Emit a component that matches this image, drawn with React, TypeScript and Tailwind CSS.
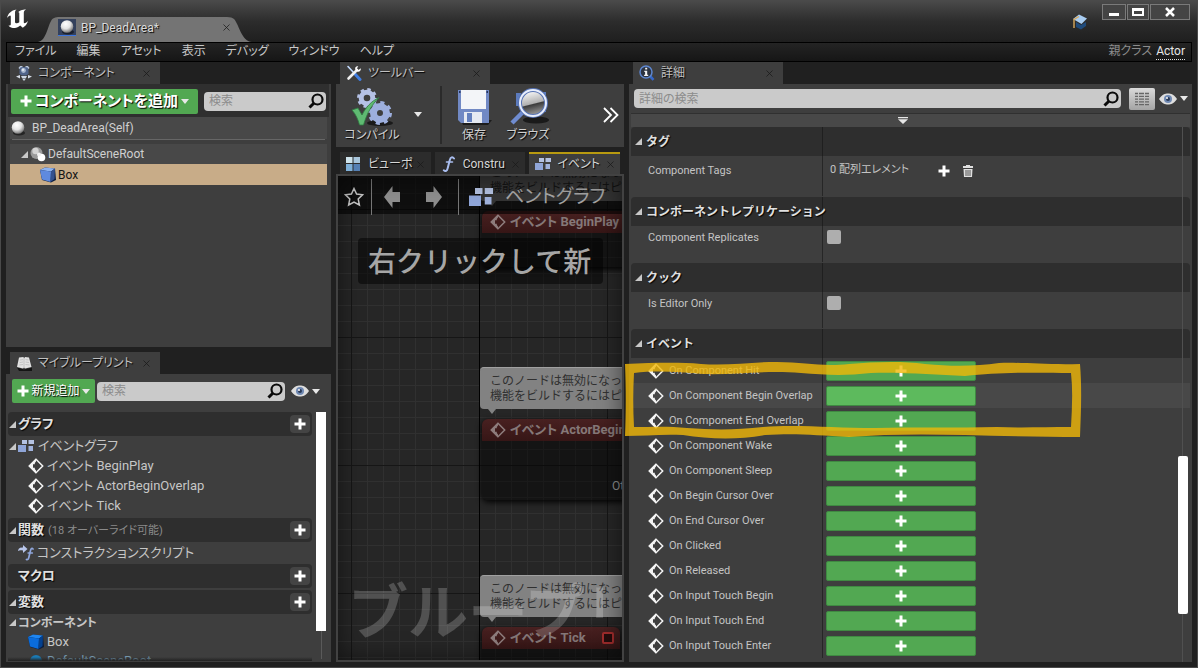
import { useState } from 'react';
import type { ReactNode } from 'react';
import clsx from 'clsx';

const SHADOW = '[text-shadow:1px_1px_1px_#000]';
const FULL_WIDTH = '[font-feature-settings:normal]';

const menus = ['ファイル', '編集', 'アセット', '表示', 'デバッグ', 'ウィンドウ', 'ヘルプ'];

const componentEvents = [
    'On Component Hit',
    'On Component Begin Overlap',
    'On Component End Overlap',
    'On Component Wake',
    'On Component Sleep',
    'On Begin Cursor Over',
    'On End Cursor Over',
    'On Clicked',
    'On Released',
    'On Input Touch Begin',
    'On Input Touch End',
    'On Input Touch Enter',
];

/* ---------- icons ---------- */

function UnrealLogo() {
    return (
        <svg className="h-5 w-[22px]" viewBox="0 0 22 20" fill="#fff">
            <path d="M0 9C1 4.500 4 1.500 9.500.5C7.800 1.800 8 3 8 4.500V13c0 1.600 2.600 1.800 4.300.3V4.500c0-1-.4-1.400-1.500-1C12.500 1.500 15 .8 19 .3c-1.800 1.200-2.200 2.200-2.200 3.700v9.600c0 1.200 1.800.8 4.200-1.600c-1 3.600-3 5.300-5.200 6.800L13.200 16.600c-1.700 1.700-3.600 2.400-5.400 2.400c-2.900 0-5-.8-6.300-2.600c1.200.4 2.300.1 2.300-1.200V7.500C3.800 5.500 1.800 6.500 0 9z" />
        </svg>
    );
}

function Sphere({ className }: { className?: string }) {
    return (
        <svg className={className} viewBox="0 0 16 16">
            <defs>
                <radialGradient id="ball" cx=".4" cy=".3" r=".75">
                    <stop offset="0" stopColor="#fff" />
                    <stop offset=".5" stopColor="#e4e4e4" />
                    <stop offset="1" stopColor="#666" />
                </radialGradient>
            </defs>
            <ellipse cx="9" cy="13" rx="6" ry="2.500" fill="#000" opacity=".5" />
            <circle cx="8" cy="7.500" r="6.300" fill="url(#ball)" />
        </svg>
    );
}

function SceneRootIcon() {
    return (
        <svg className="h-4 w-4" viewBox="0 0 16 16">
            <circle cx="6.500" cy="7" r="6" fill="#9a9a9a" />
            <circle cx="5.500" cy="5" r="3.200" fill="#d2d2d2" />
            <circle cx="11.500" cy="11.500" r="3.800" fill="#fff" />
            <circle cx="9" cy="8.500" r="2" fill="#f1f1f1" />
        </svg>
    );
}

function CubeIcon({ vivid }: { vivid?: boolean }) {
    return (
        <svg className="h-4 w-4" viewBox="0 0 16 16">
            <path d="M0 3L5 .500L15 1.500L16 13L11 15.500L2 13z" fill="#0b1c3c" />
            <path d="M0 3L5 .5L15 1.500L11 4.500z" fill={vivid ? '#1f86f0' : '#8db2f0'} />
            <path d="M0 3L11 4.500L10.500 15L2 12.500z" fill={vivid ? '#0a6cdc' : '#5f8ade'} />
            <path d="M11 4.500L15 1.500L14.500 12L10.500 15z" fill={vivid ? '#04408e' : '#34508e'} />
        </svg>
    );
}

function Plus({ className = 'h-3 w-3' }: { className?: string }) {
    return (
        <svg className={className} viewBox="0 0 12 12" fill="#fff">
            <path d="M4.500.5h3v4h4v3h-4v4h-3v-4h-4v-3h4z" />
        </svg>
    );
}

function CaretDown() {
    return (
        <svg className="h-[5px] w-2 shrink-0" viewBox="0 0 8 5" fill="#e8e8e8">
            <path d="M0 0h8L4 5z" />
        </svg>
    );
}

function TreeArrow() {
    return (
        <svg className="h-[7px] w-[7px] shrink-0" viewBox="0 0 7 7" fill="#c8c8c8">
            <path d="M7 0v7H0z" />
        </svg>
    );
}

function SearchIcon() {
    return (
        <svg className="h-4 w-4 shrink-0" viewBox="0 0 16 16" fill="none" stroke="#0a0a0a">
            <circle cx="9.500" cy="6.500" r="5" strokeWidth="2.200" />
            <path d="M5.800 10.200L1.500 14.500" strokeWidth="3" />
        </svg>
    );
}

function EyeIcon() {
    return (
        <svg className="h-3 w-[18px]" viewBox="0 0 18 12">
            <path d="M0 6C3 1.500 6 .5 9 .5S15 1.500 18 6C15 10.500 12 11.500 9 11.500S3 10.500 0 6z" fill="#dedede" />
            <circle cx="9" cy="6" r="4" fill="#6f89b3" />
            <circle cx="9" cy="6" r="2" fill="#2a3a58" />
            <circle cx="8" cy="5" r="1" fill="#fff" />
        </svg>
    );
}

function EventIcon({ dim }: { dim?: boolean }) {
    const color = dim ? '#8d7c7c' : '#f4f4f4';
    return (
        <svg className="h-4 w-4 shrink-0" viewBox="0 0 16 16">
            <path d="M8 1.300L14.700 8L8 14.700L1.300 8z" fill="none" stroke={color} strokeWidth="1.500" />
            <path d="M8 .5L.5 8L8 15.500V12.500L6.800 11V9.800H5V6.200H6.800V5L8 3.500z" fill={color} />
        </svg>
    );
}

function GraphIcon({ className = 'h-3 w-4' }: { className?: string }) {
    return (
        <svg className={className} viewBox="0 0 16 12">
            <path d="M4 0h5v4H4zM10.500 0H16v4h-5.500z" fill="#b4c2e2" />
            <path d="M0 5h8v7H0z" fill="#8fa5d8" />
            <path d="M10.500 6H15v5h-4.500z" fill="#a0b2dc" />
        </svg>
    );
}

function ViewportIcon() {
    return (
        <svg className="h-[14px] w-[14px]" viewBox="0 0 14 14">
            <path d="M0 0h6.500v6H0z" fill="#cfe4ec" />
            <path d="M7.500 0H14v6H7.500z" fill="#a8c6dc" />
            <path d="M0 7h6.500v7H0z" fill="#7fb0d8" />
            <path d="M7.500 7H14v7H7.500z" fill="#5580b4" />
        </svg>
    );
}

function FunctionGlyph() {
    return (
        <svg className="h-4 w-4" viewBox="0 0 16 16" fill="none" stroke="#a9bdee" strokeLinecap="round">
            <path d="M13 2.500C11.500.5 9.600 1 8.800 4L6.600 12.500C6 15 4.500 15.800 2.800 14.300" strokeWidth="2" />
            <path d="M5.500 6h6" strokeWidth="1.600" />
        </svg>
    );
}

function ConstructionIcon() {
    return (
        <svg className="h-4 w-4" viewBox="0 0 16 16" fill="none" stroke="#8fa6dc" strokeLinecap="round">
            <path d="M15 4C14 2.800 13 3.500 12.500 5.500L10.800 12.500C10.400 14.500 9.500 15 8.500 14.500" strokeWidth="1.700" />
            <path d="M10 8h4.500" strokeWidth="1.300" />
            <path d="M0 6C.5 3 2 2.500 5 2.500V0L9.500 4L5 8V5.500C3 5.300 1.500 5 0 6z" fill="#b8c6ea" stroke="none" />
        </svg>
    );
}

function PuppetIcon() {
    return (
        <svg className="h-[15px] w-4" viewBox="0 0 16 15">
            <path d="M3.500 1h9v7L10 9.500H6L3.500 8z" fill="#50648a" />
            <path d="M3 2.500L4.500.5h2M13 2.500L11.500.5h-2" stroke="#b9c6da" strokeWidth="1.300" fill="none" />
            <circle cx="7.500" cy="4.500" r="2.400" fill="#a9b8cf" />
            <circle cx="7" cy="3.800" r="1.200" fill="#e2e8f0" />
            <path d="M0 10.500l4-1.500v3.500zM16 10.500L12 9v3.500z" fill="#d6dce6" />
            <path d="M5 10h6l-1 2H6zM6 12.500h4L8 15z" fill="#cdd6e2" />
        </svg>
    );
}

function BookIcon() {
    return (
        <svg className="h-[15px] w-4" viewBox="0 0 16 15">
            <path d="M1 11.500l7 2l8-2V15H3z" fill="#151515" />
            <path d="M1 11L3 1.500L7.500 1L8 2.500L9 1L13 1.500L15.500 11L9 12.500L8 11.500L7 12.500z" fill="#e2e2e2" />
            <path d="M8 2.500V11.500M4 4l3-.3M3.700 6.500L7 6M3.300 9L7 8.500M9.500 3.700l3 .3M9.500 6l3.500.5M9.500 8.500l4 .5" stroke="#b4b4b4" strokeWidth=".7" />
        </svg>
    );
}

function ToolsIcon() {
    return (
        <svg className="h-4 w-4" viewBox="0 0 16 16" fill="none" strokeLinecap="round">
            <path d="M2 1.500L8 8" stroke="#c4dcff" strokeWidth="1.600" />
            <path d="M8.500 8.500L14 14.500" stroke="#3f7de0" strokeWidth="3" />
            <path d="M2.500 13.500L11 5" stroke="#f0f0f0" strokeWidth="2.600" />
            <path d="M14.800 3.200L12.500 5L10.800 3.500L12.300 1.200C10 .8 8.600 2.500 9.300 4.500L11.500 6.700C13.500 7.200 15.200 5.500 14.800 3.200z" fill="#fff" />
        </svg>
    );
}

function DetailsIcon() {
    return (
        <svg className="h-4 w-4" viewBox="0 0 16 16">
            <path d="M10.500 10.500L14.500 14.800" stroke="#3567c8" strokeWidth="2.600" />
            <circle cx="7" cy="7" r="6" fill="#2c3340" stroke="#5d86cf" strokeWidth="1.500" />
            <path d="M6.200 2.800h2v1.800h-2zM5.300 5.800h2.900v4h1v1.200H5.100V9.800h1V7h-.8z" fill="#f2f2f2" />
        </svg>
    );
}

function CompileIcon() {
    return (
        <svg className="h-10 w-11" viewBox="0 0 44 40" fill="none">
            <ellipse cx="30" cy="36" rx="13" ry="3" fill="#1a1a1a" />
            <circle cx="17" cy="11" r="5.800" stroke="#b5c2e6" strokeWidth="5" />
            <circle cx="17" cy="11" r="8.500" stroke="#b5c2e6" strokeWidth="3" strokeDasharray="3.340 3.340" />
            <circle cx="30" cy="26" r="6.500" stroke="#9dafde" strokeWidth="7" />
            <circle cx="30" cy="26" r="10.500" stroke="#9dafde" strokeWidth="3" strokeDasharray="4.120 4.120" />
            <path d="M2 23l6-2l4 7C16 20 21 14.500 29 10.500C22 17.500 17 26 13.500 38H9.500C8 32 5.500 27 2 23z" fill="#5fba72" stroke="#2f7a40" strokeWidth=".8" />
        </svg>
    );
}

function SaveIcon() {
    return (
        <svg className="h-10 w-9" viewBox="0 0 36 40">
            <path d="M5 33h31l-4 5H7z" fill="#1c1c1c" />
            <path d="M2 3h31v33H5l-3-3z" fill="#7189c4" />
            <path d="M5 3h25v19H5z" fill="#f3f5f8" />
            <path d="M8 25h18v11H8z" fill="#e6eaf2" />
            <path d="M11 26h5v9h-5z" fill="#6480bf" />
            <path d="M3 4h1.500v2H3zM30.500 4H32v2h-1.500z" fill="#26345c" />
        </svg>
    );
}

function BrowseIcon() {
    return (
        <svg className="h-10 w-11" viewBox="0 0 44 40">
            <defs>
                <linearGradient id="lens" x1=".35" y1="0" x2=".6" y2="1">
                    <stop offset="0" stopColor="#fff" />
                    <stop offset=".52" stopColor="#b0b0b0" />
                    <stop offset=".56" stopColor="#3c3c3c" />
                    <stop offset="1" stopColor="#a8a8a8" />
                </linearGradient>
            </defs>
            <ellipse cx="30" cy="33" rx="13" ry="3.500" fill="#1a1a1a" />
            <path d="M10 6h5l-2 13h-3zM35 5h5v20h-6z" fill="#5c7bbd" />
            <path d="M17 25L6 36" stroke="#6f8cd0" strokeWidth="4.500" />
            <circle cx="27" cy="16" r="13" fill="url(#lens)" stroke="#5773b4" strokeWidth="4" />
            <circle cx="27" cy="16" r="13" fill="none" stroke="#e8eefc" strokeWidth="2" />
        </svg>
    );
}

function GraduationIcon() {
    return (
        <svg className="h-4 w-4" viewBox="0 0 16 16">
            <path d="M4 8l5 3l5-3v4l-5 3.500L4 13z" fill="#1f4b7c" />
            <path d="M1 5L7 .5L15 4.500L9.500 10z" fill="#a9cdf2" />
            <path d="M7 2.500L2 5.500V14" stroke="#d7a95c" strokeWidth="1.400" fill="none" />
        </svg>
    );
}

/* ---------- shared pieces ---------- */

function PanelTab({ icon, label }: { icon: ReactNode; label: string }) {
    return (
        <div className="flex h-[22px]">
            <div className="ml-1 flex w-[150px] items-center gap-1.5 bg-[#3e3e3e] pr-2 pl-1.5">
                {icon}
                <span className={clsx('flex-1 text-[12px] text-[#c0c0c0]', SHADOW)}>{label}</span>
                <CloseButton />
            </div>
        </div>
    );
}

function CloseButton() {
    return (
        <button type="button" aria-label="閉じる" className="flex h-3 w-3 shrink-0 items-center justify-center">
            <svg className="h-[7px] w-[7px]" viewBox="0 0 7 7" stroke="#1a1a1a" strokeOpacity=".75">
                <path d="M.5.5l6 6M6.500.5l-6 6" />
            </svg>
        </button>
    );
}

function SearchBox({ placeholder }: { placeholder: string }) {
    return (
        <label className="flex h-[19px] min-w-0 flex-1 items-center rounded-sm bg-[#cacaca] pr-0.5 pl-[5px]">
            <input
                type="text"
                aria-label={placeholder}
                placeholder={placeholder}
                className="h-full min-w-0 flex-1 bg-transparent text-[12px] text-black outline-none placeholder:text-[#8c8c8c]"
            />
            <SearchIcon />
        </label>
    );
}

function BlueprintSection({ title, note, arrow = true }: { title: string; note?: string; arrow?: boolean }) {
    return (
        <div className="flex h-6 items-center gap-0.5 rounded-sm bg-[#2e2e2e] pr-0.5 pl-px">
            {arrow ? <TreeArrow /> : <span className="w-[7px]" />}
            <h3 className={clsx('text-[13px] font-bold text-[#e0e0e0]', SHADOW)}>{title}</h3>
            {note && <span className="ml-0.5 pt-0.5 text-[11px] text-[#8a8a8a]">{note}</span>}
            <button type="button" aria-label={`${title}を追加`} className="ml-auto flex h-[18px] w-5 items-center justify-center rounded-sm bg-[#444]">
                <Plus />
            </button>
        </div>
    );
}

/* ---------- left column ---------- */

function ComponentsPanel() {
    return (
        <section>
            <PanelTab icon={<PuppetIcon />} label="コンポーネント" />
            <div className="h-[263px] bg-[#3e3e3e]">
                <div className="mx-0.5 flex h-[33px] items-center gap-1.5 bg-[#2f2f2f] px-[3px] pt-px">
                    <button type="button" className="flex h-[25px] w-[187px] shrink-0 items-center justify-center gap-[3px] rounded-xs bg-[#52a852]">
                        <Plus />
                        <span className={clsx('text-[15px] font-bold text-white', SHADOW)}>コンポーネントを追加</span>
                        <CaretDown />
                    </button>
                    <SearchBox placeholder="検索" />
                </div>
                <div className="mr-1 ml-1 text-[12px] text-[#d0d0d0]">
                    <div className="flex h-[22px] items-center gap-1.5 bg-[#484848]">
                        <Sphere className="h-4 w-4" />
                        <span>BP_DeadArea(Self)</span>
                    </div>
                    <div className="mx-0.5 mb-1 h-px bg-[#666]" />
                    <div className="flex h-5 items-center gap-0.5 bg-[#484848] pl-[11px]">
                        <TreeArrow />
                        <SceneRootIcon />
                        <span>DefaultSceneRoot</span>
                    </div>
                    <div className="flex h-[21px] items-center gap-0.5 bg-[#c8ac88] pl-[30px] text-[#141414]">
                        <CubeIcon />
                        <span>Box</span>
                    </div>
                </div>
            </div>
        </section>
    );
}

function MyBlueprintPanel() {
    return (
        <section className="flex min-h-0 flex-1 flex-col">
            <PanelTab icon={<BookIcon />} label="マイブループリント" />
            <div className="flex min-h-0 flex-1 flex-col bg-[#3e3e3e] pb-px">
                <div className="flex h-[38px] shrink-0 items-center gap-0.5 pr-[11px] pb-1 pl-1.5">
                    <button type="button" className="flex h-6 w-[83px] shrink-0 items-center justify-center gap-0.5 rounded-xs bg-[#52a852]">
                        <Plus />
                        <span className={clsx('text-[12px] text-white', SHADOW)}>新規追加</span>
                        <CaretDown />
                    </button>
                    <SearchBox placeholder="検索" />
                    <button type="button" aria-label="表示オプション" className="ml-1 flex items-center gap-[3px]">
                        <EyeIcon />
                        <CaretDown />
                    </button>
                </div>
                <div className="flex min-h-0 flex-1 gap-1 pr-[5px] pl-0.5">
                    <div className="relative min-w-0 flex-1 overflow-hidden text-[13px] text-[#c6c6c6]">
                        <BlueprintSection title="グラフ" />
                        <div className="mb-0.5">
                            <div className="flex h-5 items-center gap-0.5 pl-px">
                                <TreeArrow />
                                <GraphIcon />
                                <span className="ml-0.5">イベントグラフ</span>
                            </div>
                            {['イベント BeginPlay', 'イベント ActorBeginOverlap', 'イベント Tick'].map((name) => (
                                <div key={name} className="flex h-5 items-center gap-[3px] pl-5">
                                    <EventIcon />
                                    <span>{name}</span>
                                </div>
                            ))}
                        </div>
                        <BlueprintSection title="関数" note="(18 オーバーライド可能)" />
                        <div className="flex h-[22px] items-center gap-[3px] pl-2.5">
                            <ConstructionIcon />
                            <span>コンストラクションスクリプト</span>
                        </div>
                        <BlueprintSection title="マクロ" arrow={false} />
                        <div className="h-0.5" />
                        <BlueprintSection title="変数" />
                        <div className="flex h-[17px] items-center gap-0.5 pl-px text-[12px]">
                            <TreeArrow />
                            <h4 className="font-bold">コンポーネント</h4>
                        </div>
                        <div className="flex h-[22px] items-center gap-[3px] pl-5">
                            <CubeIcon vivid />
                            <span>Box</span>
                        </div>
                        <div className="flex h-4 items-center gap-[3px] pl-5 text-[#7496ac]">
                            <svg className="h-4 w-4" viewBox="0 0 16 16" fill="#1a7ab4">
                                <circle cx="8" cy="8" r="6" />
                            </svg>
                            <span>DefaultSceneRoot</span>
                        </div>
                        <div className="absolute inset-x-0 bottom-0 h-1 bg-linear-to-b from-transparent to-[#222]" />
                    </div>
                    <div className="w-2.5 shrink-0">
                        <div className="h-[219px] bg-white" />
                        <div className="mx-auto h-7 w-px bg-[#5a5a5a]" />
                    </div>
                </div>
            </div>
        </section>
    );
}

/* ---------- middle column ---------- */

function ToolbarPanel() {
    const label = clsx('text-[12px] leading-4 text-[#d0d0d0]', SHADOW);
    return (
        <section>
            <PanelTab icon={<ToolsIcon />} label="ツールバー" />
            <div className="flex h-[63px] items-center bg-[#3e3e3e] pr-1 pb-0.5 pl-1.5">
                <button type="button" className="flex w-[60px] flex-col items-center">
                    <CompileIcon />
                    <span className={label}>コンパイル</span>
                </button>
                <button type="button" aria-label="コンパイルオプション" className="flex h-10 w-8 items-center justify-center">
                    <CaretDown />
                </button>
                <div className="mr-3 ml-1.5 h-[58px] w-0.5 bg-[#2a2a2a]" />
                <button type="button" className="flex w-10 flex-col items-center">
                    <SaveIcon />
                    <span className={label}>保存</span>
                </button>
                <button type="button" className="ml-[7px] flex w-[54px] flex-col items-center">
                    <BrowseIcon />
                    <span className={label}>ブラウズ</span>
                </button>
                <button type="button" aria-label="その他" className="mr-px ml-auto">
                    <svg className="h-4 w-4" viewBox="0 0 16 16" fill="none" stroke="#fff" strokeWidth="1.800">
                        <path d="M1 1l7 7l-7 7M7.500 1l7 7l-7 7" />
                    </svg>
                </button>
            </div>
        </section>
    );
}

function DocTab({ icon, label, active }: { icon: ReactNode; label: string; active?: boolean }) {
    return (
        <div
            className={clsx(
                'flex h-[22px] min-w-0 flex-1 items-center border-t-2 pr-1 pl-1.5',
                active ? 'border-t-[#b89a10] bg-[#3e3e3e]' : 'border-t-[#2c2c2c] bg-[#2c2c2c]',
            )}
        >
            <span className="flex w-[22px] shrink-0">{icon}</span>
            <span className={clsx('min-w-0 flex-1 text-[12px] whitespace-nowrap text-[#d6d6d6]', SHADOW)}>{label}</span>
            <CloseButton />
        </div>
    );
}

type NodeProps = { className: string; title: string; body: string; pin?: string; stop?: boolean };

function GraphNode({ className, title, body, pin, stop }: NodeProps) {
    return (
        <div className={clsx('absolute left-[142px]', className)}>
            <div
                className={clsx(
                    'relative h-[42px] w-[280px] rounded-sm border-t border-[#a0a0a0] bg-[#828282] px-2.5 pt-1.5 text-[12px] leading-[15px] whitespace-nowrap text-[#303030]',
                    FULL_WIDTH,
                )}
            >
                このノードは無効になっ
                <br />
                機能をビルドするにはピ
                <svg className="absolute top-full left-2 h-[5px] w-2" viewBox="0 0 8 5" fill="#828282">
                    <path d="M0 0h8L4 5z" />
                </svg>
            </div>
            <div className={clsx('mt-2.5 ml-0.5 overflow-hidden rounded-md bg-black/45 shadow-[0_2px_6px_#000]', body)}>
                <div className="flex h-[22px] items-center gap-1 bg-linear-to-b from-[#4e2222]/90 to-[#3a1616]/90 pr-1.5 pl-2">
                    <EventIcon dim />
                    <span className="text-[13px] font-bold whitespace-nowrap text-[#857878]">{title}</span>
                    {stop && <span className="ml-auto h-3 w-3 rounded-xs border-2 border-[#a02c2c] bg-[#240c0c]" />}
                </div>
                {pin && <div className="mt-9 pl-[130px] text-[12px] whitespace-nowrap text-[#8c8c8c]">{pin}</div>}
            </div>
        </div>
    );
}

function ArrowGlyph({ flip }: { flip?: boolean }) {
    return (
        <svg className={clsx('h-[22px] w-[18px]', flip && 'rotate-180')} viewBox="0 0 18 22" fill="#8e8e8e">
            <path d="M9.500 0v6H17v10H9.500v6L1 11z" />
        </svg>
    );
}

function EventGraph() {
    return (
        <section className="flex min-h-0 flex-1 flex-col">
            <div className="flex gap-1 pr-1 pl-1">
                <DocTab icon={<ViewportIcon />} label="ビューポ" />
                <DocTab icon={<FunctionGlyph />} label="Constru" />
                <DocTab icon={<GraphIcon />} label="イベント" active />
            </div>
            <div className="relative min-h-0 flex-1 overflow-hidden border-2 border-[#424242] bg-[#262626] bg-[linear-gradient(#161616_1px,transparent_1px),linear-gradient(90deg,#161616_1px,transparent_1px),linear-gradient(#303030_1px,transparent_1px),linear-gradient(90deg,#303030_1px,transparent_1px)] bg-[size:128px_128px,128px_128px,16px_16px,16px_16px] bg-[position:0_33px,13px_0,0_1px,13px_0]">
                <div className="absolute inset-y-0 left-[141px] w-px bg-black" />
                <GraphNode className="-top-[17px]" title="イベント BeginPlay" body="h-14 w-[280px]" />
                <GraphNode className="top-[191px]" title="イベント ActorBeginOverlap" body="h-[81px] w-[280px]" pin="Other Actor" />
                <GraphNode className="top-[399px]" title="イベント Tick" body="h-[81px] w-[138px]" stop />

                <div className="absolute inset-x-0 top-0 flex h-[38px] items-center bg-black/60 pt-1 pl-1.5">
                    <button type="button" aria-label="お気に入り">
                        <svg className="h-5 w-5" viewBox="0 0 20 20" fill="none" stroke="#c8c8c8" strokeWidth="1.500">
                            <path d="M10 1.500l2.600 5.600l6 .7l-4.400 4.100l1.200 6.100L10 15l-5.400 3l1.200-6.100L1.400 7.800l6-.7z" />
                        </svg>
                    </button>
                    <div className="mx-[7px] h-9 w-px bg-[#777]" />
                    <button type="button" aria-label="戻る" className="ml-1">
                        <ArrowGlyph />
                    </button>
                    <button type="button" aria-label="進む" className="ml-6">
                        <ArrowGlyph flip />
                    </button>
                    <div className="mr-2.5 ml-[15px] h-9 w-px bg-[#777]" />
                    <GraphIcon className="h-5 w-6" />
                    <span className="ml-3 text-[19px] leading-6 whitespace-nowrap text-[#a4a4a4]">ベントグラフ</span>
                </div>

                <div
                    className={clsx(
                        'absolute top-[62px] left-5 flex h-[46px] w-[245px] items-center rounded-sm bg-black/50 pt-1 pl-2.5 text-[28px] font-medium whitespace-nowrap text-[#a6a6a6]',
                        FULL_WIDTH,
                    )}
                >
                    右クリックして新
                </div>
                <div
                    className={clsx(
                        'pointer-events-none absolute bottom-0.5 left-2.5 w-[255px] overflow-hidden text-[60px] leading-[88px] font-bold whitespace-nowrap text-white/20',
                        FULL_WIDTH,
                    )}
                >
                    ブループリ
                </div>
                <div className="pointer-events-none absolute inset-0 shadow-[inset_0_0_24px_#0008]" />
            </div>
        </section>
    );
}

/* ---------- details ---------- */

function DetailsSection({ title, children }: { title: string; children: ReactNode }) {
    return (
        <section>
            <div className="flex h-[29px] rounded-t-sm bg-[#2e2e2e]">
                <h3
                    className={clsx(
                        'flex w-[192px] items-center gap-1 border-r border-[#1f1f1f] pl-1 text-[12px] font-bold whitespace-nowrap text-[#e0e0e0]',
                        SHADOW,
                        FULL_WIDTH,
                    )}
                >
                    <TreeArrow />
                    {title}
                </h3>
            </div>
            {children}
        </section>
    );
}

function CheckRow({ id, label }: { id: string; label: string }) {
    const [checked, setChecked] = useState(false);
    return (
        <div className="mb-px flex h-9">
            <div className="w-[192px] border-r border-[#262626] pt-1 pl-[17px]">
                <label htmlFor={id} className="block leading-4">
                    {label}
                </label>
            </div>
            <input
                id={id}
                type="checkbox"
                checked={checked}
                onChange={(e) => setChecked(e.target.checked)}
                className="mt-1 ml-1 h-[14px] w-[14px] appearance-none rounded-xs bg-[#aeaeae] checked:bg-[#e09a2c]"
            />
        </div>
    );
}

function DetailsPanel() {
    return (
        <aside className="relative flex min-w-0 flex-1 flex-col">
            <PanelTab icon={<DetailsIcon />} label="詳細" />
            <div className="flex min-h-0 flex-1 flex-col overflow-hidden bg-[#3e3e3e] px-0.5">
                <div className="flex h-[29px] shrink-0 items-center gap-2 pr-0.5 pl-[3px]">
                    <SearchBox placeholder="詳細の検索" />
                    <button type="button" aria-label="プロパティマトリックス" className="flex h-[22px] w-[26px] items-center justify-center rounded-xs bg-linear-to-b from-[#dadada] to-[#a4a4a4]">
                        <svg className="h-[14px] w-4" viewBox="0 0 16 14" stroke="#666" strokeWidth="1.300">
                            <path d="M1 1.500h3M5 1.500h5M11 1.500h4M1 4.300h3M5 4.300h5M11 4.300h4M1 7.100h3M5 7.100h5M11 7.100h4M1 9.900h3M5 9.900h5M11 9.900h4M1 12.700h3M5 12.700h5M11 12.700h4" />
                        </svg>
                    </button>
                    <button type="button" aria-label="表示オプション" className="-ml-1 flex items-center gap-[3px]">
                        <EyeIcon />
                        <CaretDown />
                    </button>
                </div>
                <div className="flex h-[14px] shrink-0 items-center justify-center border-t border-[#303030] bg-[#484848] pr-4">
                    <svg className="h-[7px] w-2.5" viewBox="0 0 10 7" fill="#e6e6e6">
                        <path d="M0 0h10v1.300H0zM0 2.300h10L5 7z" />
                    </svg>
                </div>
                <div className="relative min-h-0 flex-1 overflow-hidden text-[11px] text-[#c4c4c4]">
                    <DetailsSection title="タグ">
                        <div className="mb-px flex h-10">
                            <div className="w-[192px] border-r border-[#262626] pt-[7px] pl-[17px] leading-4">Component Tags</div>
                            <div className="flex h-[29px] items-center pl-[7px]">
                                <span className="w-[108px]">0 配列エレメント</span>
                                <button type="button" aria-label="エレメントを追加" className="mr-3">
                                    <Plus />
                                </button>
                                <button type="button" aria-label="すべて削除">
                                    <svg className="h-3 w-3" viewBox="0 0 12 12">
                                        <path d="M4 0h4v1h3v2H1V1h3z" fill="#e0e0e0" />
                                        <path d="M1.500 4h9L10 12H2z" fill="#e0e0e0" />
                                        <path d="M4 5v6M6 5v6M8 5v6" stroke="#444" strokeWidth=".9" />
                                    </svg>
                                </button>
                            </div>
                        </div>
                    </DetailsSection>
                    <DetailsSection title="コンポーネントレプリケーション">
                        <CheckRow id="replicates" label="Component Replicates" />
                    </DetailsSection>
                    <DetailsSection title="クック">
                        <CheckRow id="editor-only" label="Is Editor Only" />
                    </DetailsSection>
                    <DetailsSection title="イベント">
                        {componentEvents.map((name) => {
                            const hovered = name === 'On Component Begin Overlap';
                            return (
                                <div key={name} className={clsx('flex h-[25px]', hovered && 'bg-[#484848]')}>
                                    <div className="flex w-[192px] items-center gap-[5px] border-r border-[#262626] pl-[17px] whitespace-nowrap">
                                        <EventIcon />
                                        <span className="pt-0.5">{name}</span>
                                    </div>
                                    <button
                                        type="button"
                                        aria-label={name}
                                        className={clsx(
                                            'mt-[3px] ml-[3px] flex h-5 w-[150px] items-center justify-center rounded-xs border border-[#3f8a42]',
                                            hovered ? 'bg-[#5dba5d]' : 'bg-[#52a852]',
                                        )}
                                    >
                                        <Plus />
                                    </button>
                                </div>
                            );
                        })}
                    </DetailsSection>
                    <div className="absolute top-0 right-[7px] h-full w-px bg-[#505050]" />
                    <div className="absolute top-[329px] right-0.5 h-[158px] w-2.5 rounded-xs bg-white" />
                </div>
            </div>
            {/* hand-drawn marker around the overlap events */}
            <svg className="pointer-events-none absolute top-[299px] -left-1 z-10 h-[78px] w-[458px]" viewBox="0 0 458 78">
                <path
                    fillRule="evenodd"
                    fill="#f1b807"
                    fillOpacity=".8"
                    d="M0 3C28 2 52 1 76 3C104 5 124 1 152 1C180 1 196 6 224 3C250 1 276 0 300 3C330 6 352 5 374 2C396 1 420 4 455 3C457 28 456 50 455 76C420 76 380 75 340 74C300 73 260 73 224 76C190 74 170 72 140 74C112 79 84 78 58 74C36 73 20 75 0 75C1 50 1 28 0 3zM9 12C32 9 54 11 78 13C112 14 140 9 176 12C200 14 220 15 246 12C280 11 310 14 340 15C372 12 396 11 446 12C448 30 447 48 446 66C420 66 396 67 372 66C330 67 290 66 250 67C210 67 170 63 138 66C112 69 88 69 62 67C44 65 28 66 9 66C8 48 8 30 9 12z"
                />
            </svg>
        </aside>
    );
}

/* ---------- window ---------- */

function TitleBar() {
    return (
        <header className="flex h-[41px] justify-between bg-linear-to-b from-[#4a4a4a] via-[#2c2c2c] to-[#1f1f1f] pr-[7px]">
            <div className="flex items-end">
                <div className="mb-[13px] ml-1.5 self-end">
                    <UnrealLogo />
                </div>
                <div className="relative ml-[9px] flex h-[25px] w-[214px] items-center px-5 pb-1">
                    <svg className="absolute inset-0 h-full w-full" viewBox="0 0 214 25" preserveAspectRatio="none" fill="#747474">
                        <path d="M0 25C9 24 10 5 15 1.500Q17 0 20 0H189Q194 0 196 2C201 7 203 24 214 25z" />
                    </svg>
                    <div className="relative flex w-full items-center">
                        <span className="flex h-[17px] w-[18px] items-center justify-center border-b border-[#3a74e0] bg-[#34415c]">
                            <Sphere className="h-4 w-4" />
                        </span>
                        <span className={clsx('ml-[5px] flex-1 text-[12px] text-[#dcdcdc]', SHADOW)}>BP_DeadArea*</span>
                        <CloseButton />
                    </div>
                </div>
            </div>
            <div className="flex gap-2.5 pt-[3px]">
                <button type="button" aria-label="チュートリアル" className="mt-2.5 mr-1 self-start">
                    <GraduationIcon />
                </button>
                <div className="flex h-4 gap-px">
                    <button type="button" aria-label="最小化" className="flex w-6 items-center justify-center border border-[#7a7a7a] bg-[#444]">
                        <span className="mt-1 h-[3px] w-2.5 bg-white" />
                    </button>
                    <button type="button" aria-label="最大化" className="flex w-[22px] items-center justify-center border border-[#7a7a7a] bg-[#444]">
                        <span className="h-2 w-3 border-2 border-t-3 border-white" />
                    </button>
                    <button type="button" aria-label="ウィンドウを閉じる" className="flex w-10 items-center justify-center border border-[#7a7a7a] bg-[#444]">
                        <svg className="h-2.5 w-2.5" viewBox="0 0 10 10" stroke="#fff" strokeWidth="2.500">
                            <path d="M1 1l8 8M9 1l-8 8" />
                        </svg>
                    </button>
                </div>
            </div>
        </header>
    );
}

export default function App() {
    return (
        <div className="flex h-screen flex-col overflow-hidden border border-[#4a4a4a] bg-[#202020] font-['Roboto','Noto_Sans_CJK_JP',sans-serif] [font-feature-settings:'palt']">
            <TitleBar />
            <nav className="mx-[5px] flex h-5 items-center justify-between border border-black bg-linear-to-b from-[#242424] to-[#161616] pr-1.5 pb-0.5 pl-2 text-[12px]">
                <div className="flex gap-5">
                    {menus.map((menu) => (
                        <button key={menu} type="button" className="leading-4 text-[#c8c8c8]">
                            {menu}
                        </button>
                    ))}
                </div>
                <div className="flex gap-1 leading-4 text-[#8c8c8c]">
                    親クラス
                    <a href="#actor" className="border-b border-dotted border-[#ddd] text-[#e6e6e6]">
                        Actor
                    </a>
                </div>
            </nav>
            <main className="flex min-h-0 flex-1 gap-[5px] px-[5px] pb-[5px]">
                <div className="flex w-[325px] shrink-0 flex-col gap-[5px]">
                    <ComponentsPanel />
                    <MyBlueprintPanel />
                </div>
                <div className="flex w-[288px] shrink-0 flex-col gap-[5px]">
                    <ToolbarPanel />
                    <EventGraph />
                </div>
                <DetailsPanel />
            </main>
        </div>
    );
}
